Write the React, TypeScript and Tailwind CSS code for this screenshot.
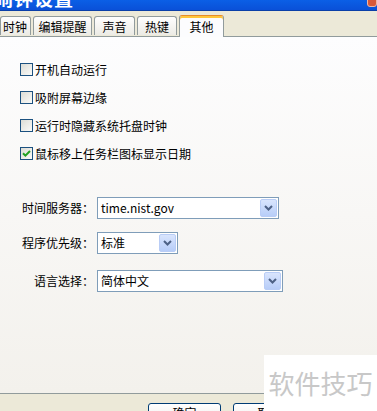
import React from 'react';

const tabs = [
  { label: '时钟', w: 'w-[31px]', justify: 'justify-end pr-[3px]' },
  { label: '编辑提醒', w: 'w-[59px]', justify: 'justify-center' },
  { label: '声音', w: 'w-[41px]', justify: 'justify-center' },
  { label: '热键', w: 'w-[40px]', justify: 'justify-center' },
];

const options = [
  { label: '开机自动运行', checked: false },
  { label: '吸附屏幕边缘', checked: false },
  { label: '运行时隐藏系统托盘时钟', checked: false },
  { label: '鼠标移上任务栏图标显示日期', checked: true },
];

const Checkbox = ({ checked }: { checked: boolean }) => (
  <span className="flex items-center justify-center w-[13px] h-[13px] border border-[#1c5180] bg-gradient-to-br from-[#dcdcd5] to-[#fbfbf9]">
    {checked && (
      <svg width="9" height="9" viewBox="0 0 9 9">
        <path d="M1 4.2 L3.4 6.6 L8 2" fill="none" stroke="#21a121" strokeWidth="2" />
      </svg>
    )}
  </span>
);

const Combo = ({ value, width }: { value: string; width: string }) => (
  <div className={`flex items-center h-[22px] ${width} border border-[#7f9db9] bg-white pl-[3px] pr-[1px]`}>
    <span className="flex-1 text-[12px] text-black leading-none">{value}</span>
    <span className="flex items-center justify-center w-[17px] h-[18px] rounded-[2px] border border-[#b9cdf6] bg-gradient-to-b from-[#d9e5fd] to-[#b7cdf8]">
      <svg width="9" height="6" viewBox="0 0 9 6">
        <path d="M1 1 L4.5 4.5 L8 1" fill="none" stroke="#4d6185" strokeWidth="2" />
      </svg>
    </span>
  </div>
);

export default function App() {
  return (
    <div
      className="relative w-[377px] h-[411px] overflow-hidden flex flex-col bg-[#ece9d8]"
      style={{ fontFamily: '"Noto Sans CJK SC", "DejaVu Sans", sans-serif' }}
    >
      {/* title bar */}
      <div className="relative shrink-0 h-[11px] overflow-hidden bg-gradient-to-b from-[#0b5fe6] to-[#0a50d8] border-b border-[#0a3fa8]">
        <span className="absolute left-[-6px] top-[-12px] text-[19px] font-bold text-white leading-none tracking-[1px]">
          闹钟设置
        </span>
        <span className="absolute right-0 top-[-4px] w-[10px] h-[11px] rounded-[3px] bg-[#d9583a] border border-[#f0b8a6]" />
      </div>

      {/* tab strip */}
      <div className="shrink-0 flex items-end h-[25px] gap-[2px] relative z-10">
        {tabs.map((t) => (
          <div
            key={t.label}
            className={`flex items-center ${t.justify} ${t.w} h-[19px] border border-b-0 border-[#919b9c] rounded-t-[3px] bg-gradient-to-b from-[#fefefe] to-[#ecebe5] text-[12px] text-black leading-none pt-[2px] mb-[1px]`}
          >
            {t.label}
          </div>
        ))}
        <div className="flex items-start justify-center w-[45px] h-[22px] border border-b-0 border-[#919b9c] border-t-[#e68b2c] rounded-t-[3px] bg-[#fcfcfe] text-[12px] text-black leading-none pt-[4px] shadow-[inset_0_2px_0_#ffc73c] mb-[-1px]">
          <span className="mt-[1px]">其他</span>
        </div>
      </div>

      {/* tab panel */}
      <div className="shrink-0 h-[358px] border-t border-b border-[#919b9c] bg-gradient-to-b from-[#fdfdfe] to-[#f3f1ec] flex flex-col">
        <div className="flex flex-col gap-[15px] pl-[20px] pt-[26px]">
          {options.map((o) => (
            <label key={o.label} className="flex items-center gap-[2px] h-[13px] text-[12px] text-black leading-none">
              <Checkbox checked={o.checked} />
              <span>{o.label}</span>
            </label>
          ))}
        </div>

        <div className="flex flex-col mt-[37px]">
          <div className="flex items-center h-[22px]">
            <span className="w-[97px] pr-[3px] text-right text-[12px] text-black leading-none">时间服务器：</span>
            <Combo value="time.nist.gov" width="w-[182px]" />
          </div>
          <div className="flex items-center h-[23px] mt-[12px]">
            <span className="w-[97px] pr-[3px] text-right text-[12px] text-black leading-none">程序优先级：</span>
            <Combo value="标准" width="w-[81px]" />
          </div>
          <div className="flex items-center h-[22px] mt-[16px]">
            <span className="w-[97px] pr-[3px] text-right text-[12px] text-black leading-none">语言选择：</span>
            <Combo value="简体中文" width="w-[186px]" />
          </div>
        </div>
      </div>

      {/* footer */}
      <div className="shrink-0 flex items-start gap-[12px] pl-[148px] pt-[9px]">
        <div className="w-[73px] h-[23px] rounded-[3px] border border-[#003c74] bg-gradient-to-b from-white to-[#ecebe6] flex justify-center pt-[3px] text-[12px] leading-none">
          确定
        </div>
        <div className="w-[73px] h-[23px] rounded-[3px] border border-[#003c74] bg-gradient-to-b from-white to-[#ecebe6] flex justify-center pt-[3px] text-[12px] leading-none">
          取消
        </div>
      </div>

      {/* watermark overlay */}
      <div className="absolute left-[264px] top-[355px] w-[113px] h-[56px] bg-white flex items-center justify-center">
        <span className="text-[26px] text-[#c8c8c8] leading-none">软件技巧</span>
      </div>
    </div>
  );
}
